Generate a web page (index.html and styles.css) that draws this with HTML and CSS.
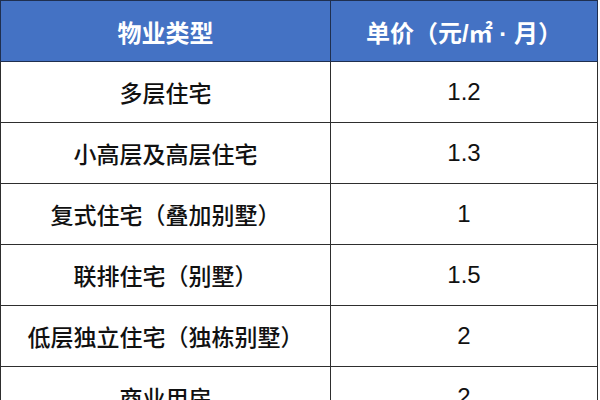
FILE: index.html
```html
<!DOCTYPE html>
<html lang="zh">
<head>
<meta charset="utf-8">
<link rel="stylesheet" href="styles.css">
</head>
<body>
<table class="fee-table">
  <thead>
    <tr><th class="col-type">物业类型</th><th class="col-price">单价（元/㎡ · 月）</th></tr>
  </thead>
  <tbody>
    <tr><td>多层住宅</td><td class="num">1.2</td></tr>
    <tr><td>小高层及高层住宅</td><td class="num">1.3</td></tr>
    <tr><td>复式住宅（叠加别墅）</td><td class="num">1</td></tr>
    <tr><td>联排住宅（别墅）</td><td class="num">1.5</td></tr>
    <tr><td>低层独立住宅（独栋别墅）</td><td class="num">2</td></tr>
    <tr><td>商业用房</td><td class="num">2</td></tr>
  </tbody>
</table>
</body>
</html>
```
FILE: styles.css
```css
html, body {
  margin: 0;
  padding: 0;
  background: #ffffff;
  overflow: hidden;
}
.fee-table {
  border-collapse: collapse;
  width: 598px;
  table-layout: fixed;
  font-family: "Liberation Sans", "Noto Sans CJK SC", sans-serif;
  font-size: 23px;
  color: #111111;
}
.fee-table th,
.fee-table td {
  border: 1px solid #2e2e2e;
  text-align: center;
  vertical-align: middle;
  padding: 0;
  box-sizing: border-box;
  height: 61px;
}
.fee-table th {
  background: #4472c4;
  color: #ffffff;
  font-weight: bold;
  font-size: 24px;
  border-color: #1f2f4f;
}
.fee-table td {
  font-weight: 500;
}
.fee-table td.num {
  font-weight: normal;
  font-size: 24px;
}
.col-type {
  width: 330px;
}
```
